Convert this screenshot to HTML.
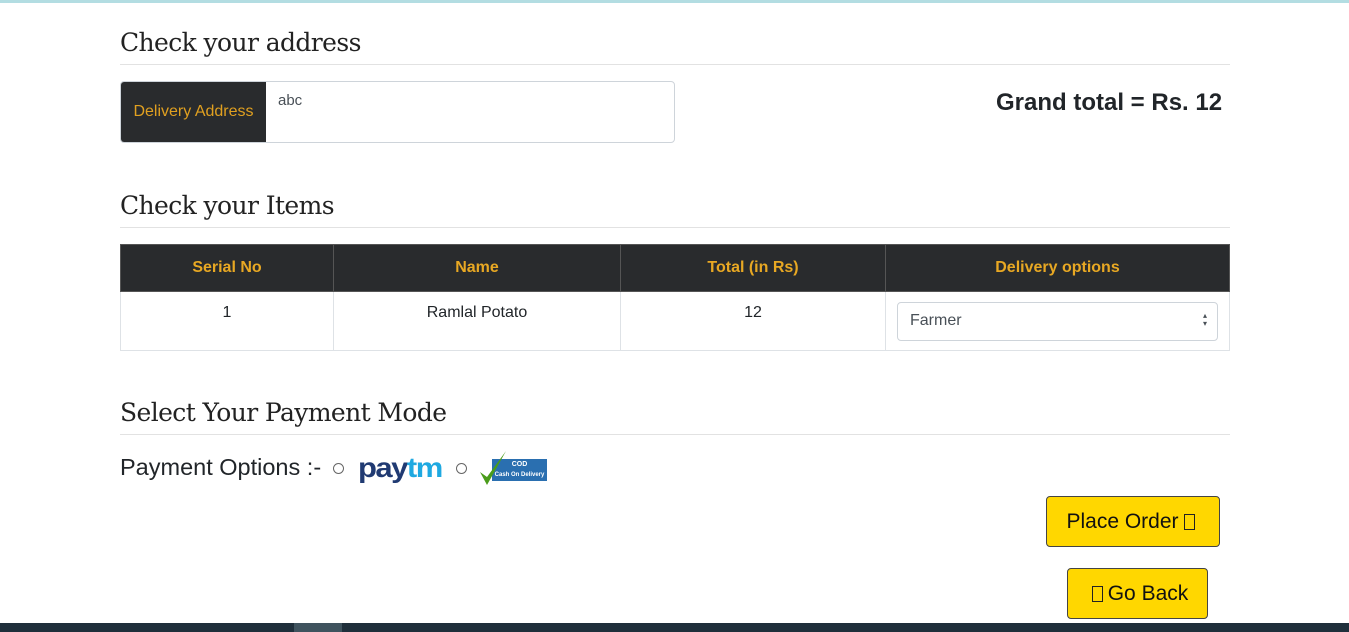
<!DOCTYPE html>
<html><head><meta charset="utf-8"><style>
body{margin:0;width:1349px;height:632px;overflow:hidden;background:#fff;font-family:"Liberation Sans",sans-serif;position:relative;color:#212529}
.top{position:absolute;left:0;top:0;width:1349px;height:3px;background:#b3dde2}
h2{position:absolute;left:120px;margin:0;font-family:"DejaVu Serif","Liberation Serif",serif;font-weight:normal;font-size:25px;letter-spacing:-0.6px;color:#222}
.hr{position:absolute;left:120px;width:1110px;height:1px;background:#e2e2e2}
.ab{position:absolute;font-size:16px}
table{position:absolute;left:120px;top:244px;width:1110px;border-collapse:collapse;font-size:16px}
th{background:#292b2d;color:#e8a823;height:46px;font-size:16px;border:1px solid #555;padding:0}
td{border:1px solid #dee2e6;height:59px;text-align:center;vertical-align:top;padding-top:12px;box-sizing:border-box}
.btn{position:absolute;background:#ffd700;border:1px solid #444;border-radius:4px;font-size:21px;color:#111;box-sizing:border-box;display:flex;align-items:center;justify-content:center}
.box{display:inline-block;width:9px;height:14px;border:1px solid #222;margin:0 5px;vertical-align:-1px}
.radio{position:absolute;width:11px;height:11px;border:1px solid #666;border-radius:50%;box-sizing:border-box}
</style></head><body>
<div class="top"></div>
<h2 style="top:28px">Check your address</h2>
<div class="hr" style="top:64px"></div>
<div style="position:absolute;left:120px;top:81px;width:555px;height:62px;border:1px solid #ced4da;border-radius:4px;box-sizing:border-box;overflow:hidden">
<div style="position:absolute;left:0;top:0;width:145px;height:62px;background:#292b2d;color:#e0a020;font-size:16px;line-height:60px;text-align:center">Delivery Address</div>
<div style="position:absolute;left:157px;top:10px;color:#495057;font-size:15px">abc</div>
</div>
<div class="ab" style="left:996px;top:89px;font-size:24px;font-weight:bold;color:#212529">Grand total = Rs. 12</div>
<h2 style="top:191px">Check your Items</h2>
<div class="hr" style="top:227px"></div>
<table>
<tr><th style="width:212px">Serial No</th><th style="width:286px">Name</th><th style="width:264px">Total (in Rs)</th><th>Delivery options</th></tr>
<tr><td>1</td><td>Ramlal Potato</td><td>12</td><td style="padding-top:10px"><div style="margin:0 10px;height:37px;border:1px solid #ced4da;border-radius:4px;text-align:left;padding-left:12px;line-height:36px;color:#495057;position:relative">Farmer<span style="position:absolute;right:10px;top:9px;font-size:8px;line-height:8px">&#9652;<br>&#9662;</span></div></td></tr>
</table>
<h2 style="top:398px">Select Your Payment Mode</h2>
<div class="hr" style="top:434px"></div>
<div class="ab" style="left:120px;top:454px;font-size:23.5px">Payment Options :-</div>
<div class="radio" style="left:333px;top:463px"></div>
<div class="ab" style="left:358px;top:450px;font-size:31px;font-weight:bold;color:#203a72;letter-spacing:-1.5px;transform:scaleY(0.9)">pay<span style="color:#1fa9e1">tm</span></div>
<div class="radio" style="left:456px;top:463px"></div>
<div style="position:absolute;left:492px;top:459px;width:55px;height:22px;background:#2a6fb0;color:#fff;font-size:7px;text-align:center;line-height:10px;font-weight:bold;padding-top:1px;box-sizing:border-box">COD<br><span style="font-size:6px">Cash On Delivery</span></div>
<svg style="position:absolute;left:478px;top:450px" width="30" height="38"><path d="M2 22 L9 35 L28 1 L9 27 Z" fill="#4a9c1a"/></svg>
<div class="btn" style="left:1046px;top:496px;width:174px;height:51px">Place Order <span class="box"></span></div>
<div class="btn" style="left:1067px;top:568px;width:141px;height:51px"><span class="box"></span> Go Back</div>
<div style="position:absolute;left:0;top:623px;width:1349px;height:9px;background:#1f2f3b"></div>
<div style="position:absolute;left:294px;top:623px;width:48px;height:9px;background:#3f535e"></div>
</body></html>
